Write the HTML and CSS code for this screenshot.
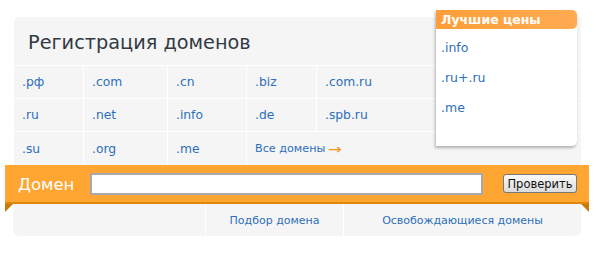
FILE: index.html
```html
<!DOCTYPE html>
<html lang="ru">
<head>
<meta charset="utf-8">
<link rel="stylesheet" href="styles.css">
</head>
<body>
<div class="widget">
  <div class="panel">
    <h1 class="title">Регистрация доменов</h1>
    <div class="grid">
      <a class="cell">.рф</a><a class="cell">.com</a><a class="cell">.cn</a><a class="cell">.biz</a><a class="cell">.com.ru</a>
      <a class="cell">.ru</a><a class="cell">.net</a><a class="cell">.info</a><a class="cell">.de</a><a class="cell">.spb.ru</a>
      <a class="cell">.su</a><a class="cell">.org</a><a class="cell">.me</a><a class="cell all">Все домены <span class="arrow">→</span></a>
    </div>
  </div>
  <div class="bar">
    <span class="bar-label">Домен</span>
    <input class="bar-input" type="text">
    <button class="bar-btn">Проверить</button>
    <span class="fold fold-left"></span>
    <span class="fold fold-right"></span>
  </div>
  <div class="links">
    <span class="lcell"></span>
    <a class="lcell">Подбор домена</a>
    <a class="lcell">Освобождающиеся домены</a>
  </div>
  <div class="best">
    <div class="best-head">Лучшие цены</div>
    <ul class="best-list">
      <li><a>.info</a></li>
      <li><a>.ru+.ru</a></li>
      <li><a>.me</a></li>
    </ul>
  </div>
</div>
</body>
</html>
```
FILE: styles.css
```css
* { box-sizing: border-box; }
html, body { margin: 0; padding: 0; background: #fff; }
body { font-family: "DejaVu Sans", Verdana, sans-serif; }
.widget { position: relative; width: 593px; height: 253px; padding-top: 17px; }
.panel { margin-left: 14px; width: 567px; background: #f5f5f5; border-radius: 6px 0 0 0; }
.title { margin: 0; height: 49px; padding: 14px 0 0 14px; font-size: 19.3px; font-weight: normal; color: #333a44; border-bottom: 1px solid #fff; }
.grid { display: grid; grid-template-columns: 69px 83px 78px 69px 1fr; grid-template-rows: 32px 32px 33px; gap: 1px; background: #fff; }
.cell { background: #f5f5f5; color: #2d6fbb; font-size: 12.3px; padding-left: 8px; display: flex; align-items: center; text-decoration: none; }
.cell.all { grid-column: 4 / span 2; font-size: 11.2px; }
.arrow { color: #f5951f; margin-left: 4px; font-size: 14px; transform: scaleX(1.2); display: inline-block; }
.bar { position: relative; margin-left: 5px; width: 584px; height: 39px; background: #ffa532; border-bottom: 2px solid #e0870f; display: flex; align-items: center; padding-left: 13px; }
.bar-label { color: #fff; font-size: 16.5px; width: 72px; margin-top: 2px; }
.bar-input { width: 393px; height: 22px; border: 2px solid #a8a8b4; background: #fff; margin: 0; padding: 0; margin-top: 1px; }
.bar-btn { margin-left: 20px; width: 74px; height: 19px; padding: 0; font-family: "DejaVu Sans", Verdana, sans-serif; font-size: 11.5px; color: #111; border: 1px solid #777; border-radius: 3px; background: linear-gradient(#fafafa, #dcdcdc); }
.fold { position: absolute; bottom: -10px; width: 0; height: 0; border-style: solid; }
.fold-left { left: 0; border-width: 8px 8px 0 0; border-color: #c97a08 transparent transparent transparent; }
.fold-right { right: 0; border-width: 0 8px 8px 0; border-color: transparent #c97a08 transparent transparent; }
.links { margin-left: 13px; width: 568px; height: 32px; display: grid; grid-template-columns: 192px 137px 1fr; gap: 1px; background: #fff; border-radius: 0 0 6px 6px; overflow: hidden; }
.lcell { background: #f5f5f5; color: #2d6fbb; font-size: 11px; display: flex; align-items: center; justify-content: center; text-decoration: none; }
.best { position: absolute; left: 436px; top: 10px; width: 141px; height: 136px; background: #fff; border-radius: 0 5px 5px 0; box-shadow: -1px 2px 3px rgba(0,0,0,0.28); }
.best-head { height: 19px; background: linear-gradient(90deg, #ff9e38, #ffab52); color: #fff; font-weight: bold; font-size: 12.5px; padding-left: 5px; line-height: 19px; border-radius: 0 5px 5px 0; }
.best-list { list-style: none; margin: 0; padding: 11px 0 0 5px; }
.best-list li { height: 30px; font-size: 12.5px; color: #2d6fbb; }
```
